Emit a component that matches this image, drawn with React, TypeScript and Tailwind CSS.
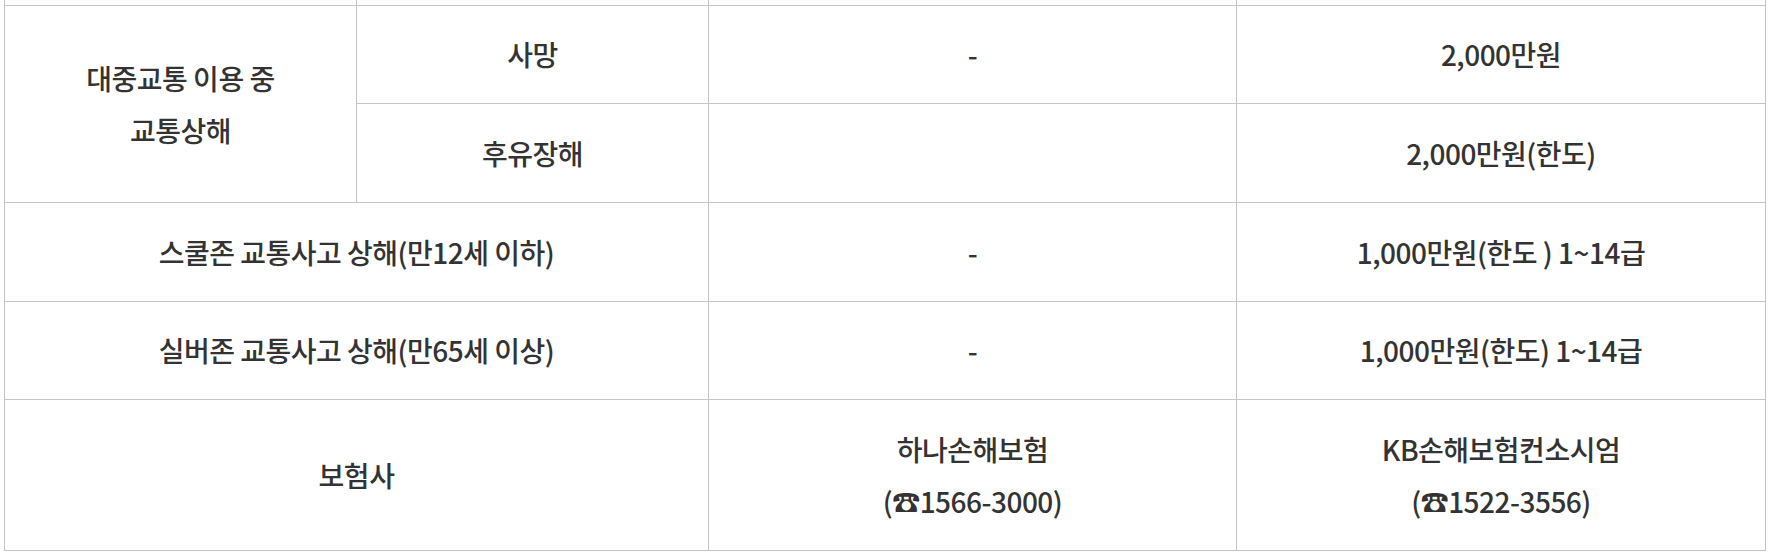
type Cell = {
  text: string[];
  colSpan?: number;
  rowSpan?: number;
};

type Row = {
  height: string;
  cells: Cell[];
};

const rows: Row[] = [
  {
    height: "h-[98px]",
    cells: [
      { text: ["대중교통 이용 중", "교통상해"], rowSpan: 2 },
      { text: ["사망"] },
      { text: ["-"] },
      { text: ["2,000만원"] },
    ],
  },
  {
    height: "h-[99px]",
    cells: [
      { text: ["후유장해"] },
      { text: [""] },
      { text: ["2,000만원(한도)"] },
    ],
  },
  {
    height: "h-[99px]",
    cells: [
      { text: ["스쿨존 교통사고 상해(만12세 이하)"], colSpan: 2 },
      { text: ["-"] },
      { text: ["1,000만원(한도 ) 1~14급"] },
    ],
  },
  {
    height: "h-[98px]",
    cells: [
      { text: ["실버존 교통사고 상해(만65세 이상)"], colSpan: 2 },
      { text: ["-"] },
      { text: ["1,000만원(한도) 1~14급"] },
    ],
  },
  {
    height: "h-[151px]",
    cells: [
      { text: ["보험사"], colSpan: 2 },
      { text: ["하나손해보험", "(☎1566-3000)"] },
      { text: ["KB손해보험컨소시엄", "(☎1522-3556)"] },
    ],
  },
];

export default function App() {
  return (
    <div className="w-[1773px] h-[557px] bg-white pl-[4px] overflow-hidden">
      <table
        className="w-[1761px] table-fixed border-collapse text-[28px] font-medium leading-[52px] tracking-[-0.5px] text-[#333] text-center"
        style={{ fontFamily: '"Noto Sans CJK KR", "Noto Sans", sans-serif' }}
      >
        <colgroup>
          <col className="w-[352px]" />
          <col className="w-[352px]" />
          <col className="w-[528px]" />
          <col className="w-[529px]" />
        </colgroup>
        <tbody>
          {/* tail of the previous row */}
          <tr className="h-[5px]">
            <td className="p-0 border-x border-b border-[#c4c4c4]" />
            <td className="p-0 border-x border-b border-[#c4c4c4]" />
            <td className="p-0 border-x border-b border-[#c4c4c4]" />
            <td className="p-0 border-x border-b border-[#c4c4c4]" />
          </tr>
          {rows.map((row, i) => (
            <tr className={row.height} key={`row-${i}`}>
              {row.cells.map((cell, j) => (
                <td
                  key={`cell-${i}-${j}`}
                  colSpan={cell.colSpan}
                  rowSpan={cell.rowSpan}
                  className="p-0 border border-[#c4c4c4] align-middle"
                >
                  {cell.text.map((line, k) => (
                    <div key={`line-${k}`}>{line}</div>
                  ))}
                </td>
              ))}
            </tr>
          ))}
        </tbody>
      </table>
    </div>
  );
}
